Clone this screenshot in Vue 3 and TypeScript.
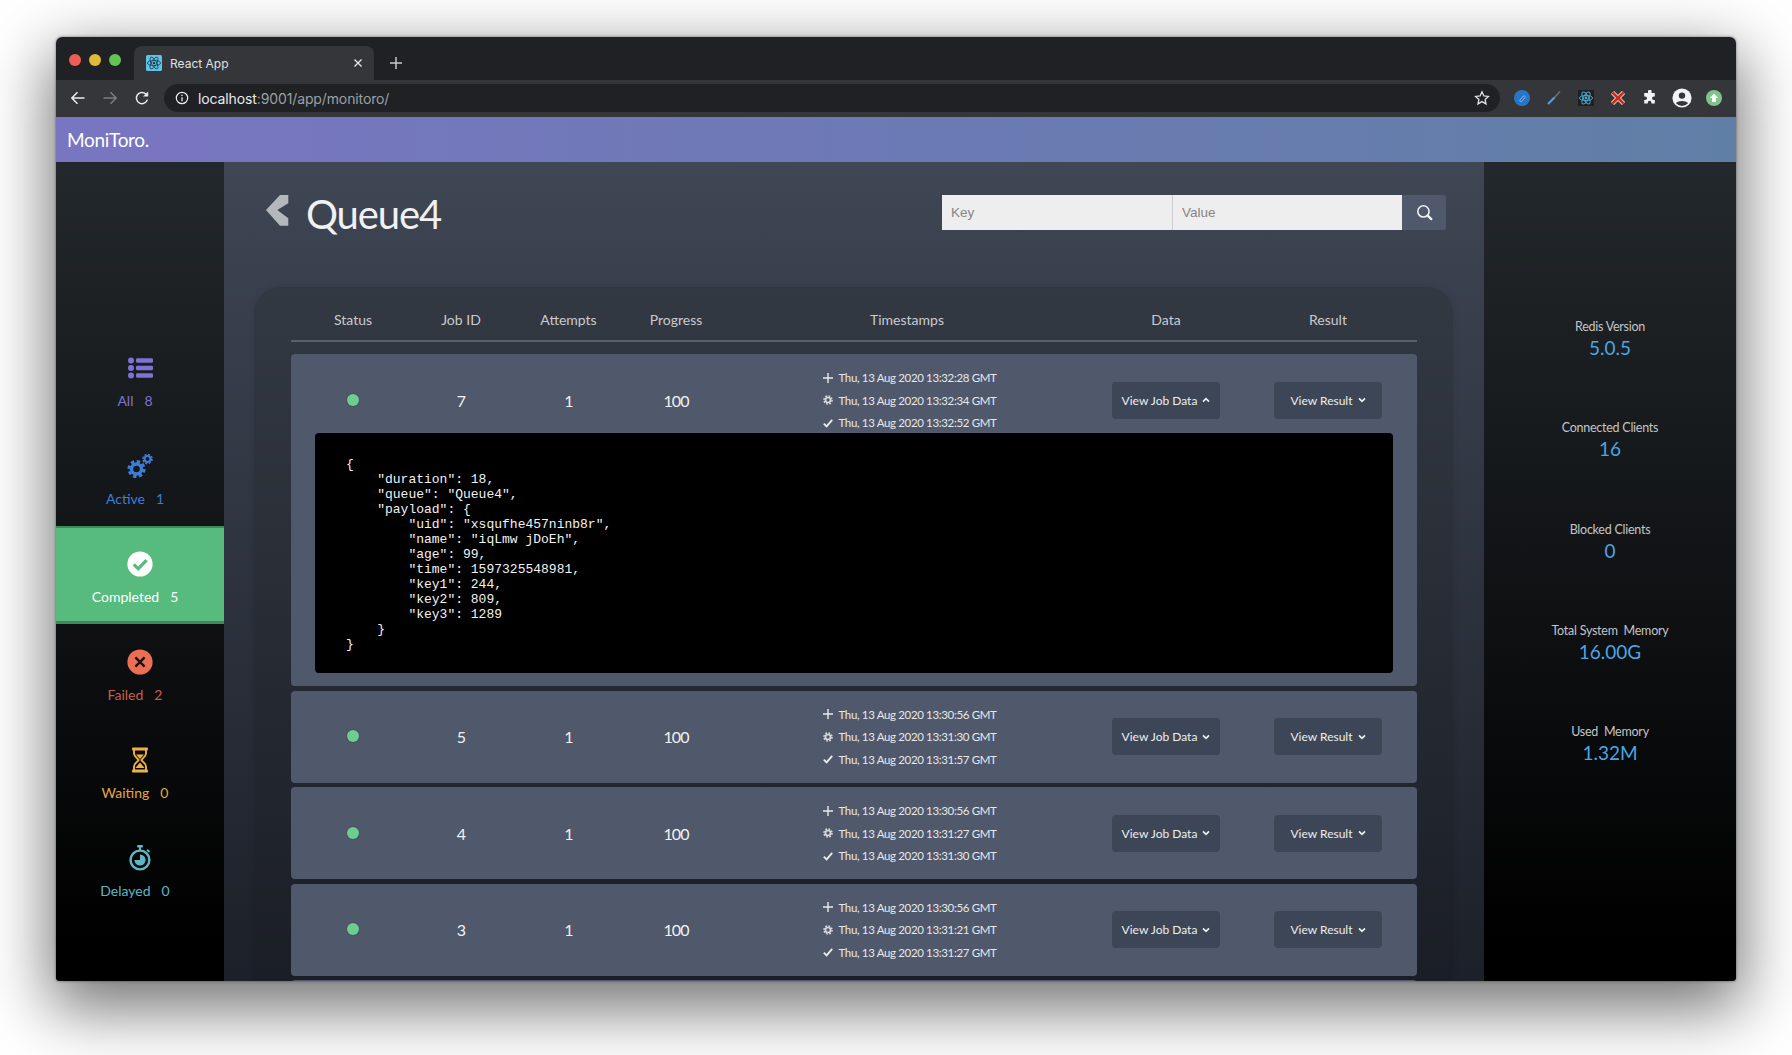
<script setup lang="ts">
interface Nav { key: string; label: string; count: number; cls: string }
interface Job { id: number; ts: [string, string, string]; open?: boolean }
const nav: Nav[] = [
  { key: 'all', label: 'All', count: 8, cls: 'c-all' },
  { key: 'active', label: 'Active', count: 1, cls: 'c-active' },
  { key: 'completed', label: 'Completed', count: 5, cls: 'c-completed' },
  { key: 'failed', label: 'Failed', count: 2, cls: 'c-failed' },
  { key: 'waiting', label: 'Waiting', count: 0, cls: 'c-waiting' },
  { key: 'delayed', label: 'Delayed', count: 0, cls: 'c-delayed' }
]
const stats = [
  ['Redis Version', '5.0.5'],
  ['Connected Clients', '16'],
  ['Blocked Clients', '0'],
  ['Total System  Memory', '16.00G'],
  ['Used  Memory', '1.32M']
]
const jobs: Job[] = [
  { id: 7, ts: ['13:32:28', '13:32:34', '13:32:52'], open: true },
  { id: 5, ts: ['13:30:56', '13:31:30', '13:31:57'] },
  { id: 4, ts: ['13:30:56', '13:31:27', '13:31:30'] },
  { id: 3, ts: ['13:30:56', '13:31:21', '13:31:27'] }
]
const json = `{
    "duration": 18,
    "queue": "Queue4",
    "payload": {
        "uid": "xsqufhe457ninb8r",
        "name": "iqLmw jDoEh",
        "age": 99,
        "time": 1597325548981,
        "key1": 244,
        "key2": 809,
        "key3": 1289
    }
}`
const heads = ['Status', 'Job ID', 'Attempts', 'Progress', 'Timestamps', 'Data', 'Result']
</script>

<template>
  <div class="page">
    <div class="window">
      <div class="tabstrip">
        <div class="lights"><i class="l r"></i><i class="l y"></i><i class="l g"></i></div>
        <div class="tab">
          <svg class="favicon" viewBox="0 0 16 16">
            <rect width="16" height="16" rx="1.5" fill="#5fc3e8" />
            <g fill="none" stroke="#22384a" stroke-width=".8">
              <ellipse cx="8" cy="8" rx="6.6" ry="2.6" />
              <ellipse cx="8" cy="8" rx="6.6" ry="2.6" transform="rotate(60 8 8)" />
              <ellipse cx="8" cy="8" rx="6.6" ry="2.6" transform="rotate(120 8 8)" />
            </g>
            <circle cx="8" cy="8" r="1.3" fill="#22384a" />
          </svg>
          <span class="tabtitle">React App</span>
          <svg class="tabx" viewBox="0 0 10 10"><path d="M1.5 1.5l7 7M8.5 1.5l-7 7" stroke="#e8eaed" stroke-width="1.3" /></svg>
        </div>
        <svg class="newtab" viewBox="0 0 12 12"><path d="M6 0v12M0 6h12" stroke="#c4c7cb" stroke-width="1.5" /></svg>
      </div>
      <div class="toolbar">
        <svg class="tb" viewBox="0 0 16 16"><path d="M14.5 8H2M7.5 2.2L1.8 8l5.7 5.8" fill="none" stroke="#e8eaed" stroke-width="1.5" /></svg>
        <svg class="tb" viewBox="0 0 16 16"><path d="M1.5 8H14M8.5 2.2L14.2 8l-5.7 5.8" fill="none" stroke="#7b7d80" stroke-width="1.5" /></svg>
        <svg class="tb" viewBox="0 0 16 16"><path d="M13.4 9.6A5.6 5.6 0 1 1 12 4.1" fill="none" stroke="#e8eaed" stroke-width="1.5" /><path d="M14.2 1.4v5.2H9z" fill="#e8eaed" /></svg>
        <div class="omni">
          <svg class="info" viewBox="0 0 14 14"><circle cx="7" cy="7" r="5.7" fill="none" stroke="#e8eaed" stroke-width="1.2" /><path d="M7 6.2v4M7 3.8v1.3" stroke="#e8eaed" stroke-width="1.3" /></svg>
          <span class="url"><b>localhost</b>:9001/app/monitoro/</span>
          <svg class="star" viewBox="0 0 16 16"><path d="M8 1.8l1.9 4.1 4.5.5-3.3 3 .9 4.5L8 11.6l-4 2.3.9-4.5-3.3-3 4.5-.5z" fill="none" stroke="#dfe1e5" stroke-width="1.3" /></svg>
        </div>
        <div class="exts">
          <svg class="ext" viewBox="0 0 16 16"><circle cx="8" cy="8" r="8" fill="#2a76c6" /><path d="M5.5 10.5l4-4.5a1.2 1.2 0 0 1 1.6 1.6l-4 4.2z" fill="none" stroke="#7fb0e4" stroke-width="1" /></svg>
          <svg class="ext" viewBox="0 0 16 16"><path d="M14 1.5L8 8" stroke="#6d6f73" stroke-width="1.5" /><path d="M8.5 7.5L2 14" stroke="#5a9bd8" stroke-width="2.2" /></svg>
          <svg class="ext" viewBox="0 0 16 16">
            <rect width="16" height="16" fill="#1d1f22" />
            <g fill="none" stroke="#4fa8cc" stroke-width="1">
              <ellipse cx="8" cy="8" rx="6.6" ry="2.6" />
              <ellipse cx="8" cy="8" rx="6.6" ry="2.6" transform="rotate(60 8 8)" />
              <ellipse cx="8" cy="8" rx="6.6" ry="2.6" transform="rotate(120 8 8)" />
            </g>
            <circle cx="8" cy="8" r="1.4" fill="#4fa8cc" />
          </svg>
          <svg class="ext" viewBox="0 0 16 16"><path d="M2.5 2.5l11 11M13.5 2.5l-11 11" stroke="#f0e6e0" stroke-width="4.4" /><path d="M2.5 2.5l11 11M13.5 2.5l-11 11" stroke="#cf2b1e" stroke-width="2.8" /></svg>
          <svg class="ext" viewBox="0 0 16 16"><path d="M6 1.5a1.8 1.8 0 0 1 3.6 0V3h3.2v3.4h-1a1.8 1.8 0 0 0 0 3.6h1v3.6H9.4v-1.1a1.8 1.8 0 0 0-3.6 0v1.1H2.2V10h1a1.8 1.8 0 0 0 0-3.6h-1V3H6z" fill="#f1f3f4" /></svg>
          <svg class="ext big" viewBox="0 0 20 20"><circle cx="10" cy="10" r="9.6" fill="#f1f3f4" /><circle cx="10" cy="7.6" r="3.2" fill="#35363a" /><path d="M3.8 15a7.5 4.4 0 0 1 12.4 0 8 8 0 0 1-12.4 0z" fill="#35363a" /></svg>
          <svg class="ext" viewBox="0 0 16 16"><circle cx="8" cy="8" r="8" fill="#7fc488" /><path d="M8 3.5L12.2 8H10v4H6V8H3.8z" fill="#fff" /></svg>
        </div>
      </div>
      <header class="brandbar"><span class="brand">MoniToro.</span></header>

      <div class="body">
        <aside class="side">
          <div v-for="n in nav" :key="n.key" class="navitem" :class="n.cls">
            <svg v-if="n.key === 'all'" class="navicon" viewBox="0 0 26 26">
              <g fill="currentColor">
                <circle cx="4" cy="5.5" r="3" /><circle cx="4" cy="13" r="3" /><circle cx="4" cy="20.5" r="3" />
                <rect x="9" y="3.2" width="17" height="4.6" rx="1.4" />
                <rect x="9" y="10.7" width="17" height="4.6" rx="1.4" />
                <rect x="9" y="18.2" width="17" height="4.6" rx="1.4" />
              </g>
            </svg>
            <svg v-else-if="n.key === 'active'" class="navicon" viewBox="0 0 26 26">
              <g fill="none" stroke="currentColor">
                <circle cx="9.5" cy="16" r="5" stroke-width="3.4" />
                <circle cx="9.5" cy="16" r="7.6" stroke-width="3" stroke-dasharray="3.4 2.57" />
                <circle cx="20.5" cy="6" r="2.9" stroke-width="2" />
                <circle cx="20.5" cy="6" r="4.4" stroke-width="1.8" stroke-dasharray="2 1.45" />
              </g>
            </svg>
            <svg v-else-if="n.key === 'completed'" class="navicon" viewBox="0 0 26 26">
              <circle cx="13" cy="13" r="12.6" fill="#fff" />
              <path d="M6.8 13.4l4.4 4.4 8.4-8.6" fill="none" stroke="#56bb7c" stroke-width="3.2" />
            </svg>
            <svg v-else-if="n.key === 'failed'" class="navicon" viewBox="0 0 26 26">
              <circle cx="13" cy="13" r="12.6" fill="#ea6f53" />
              <path d="M8.4 8.4l9.2 9.2M17.6 8.4l-9.2 9.2" stroke="#1a1414" stroke-width="2.4" />
            </svg>
            <svg v-else-if="n.key === 'waiting'" class="navicon" viewBox="0 0 26 26">
              <rect x="5" y="0.5" width="16" height="3" rx="1" fill="currentColor" />
              <rect x="5" y="22.5" width="16" height="3" rx="1" fill="currentColor" />
              <path d="M7 3v3.5c0 3 3.6 4.7 4.6 6.5-1 1.8-4.6 3.5-4.6 6.5V23M19 3v3.5c0 3-3.6 4.7-4.6 6.5 1 1.8 4.6 3.5 4.6 6.5V23" fill="none" stroke="currentColor" stroke-width="1.9" />
              <path d="M9 7.5h8L13 12zM13 15.5l4.6 5.5H8.4z" fill="currentColor" />
            </svg>
            <svg v-else class="navicon" viewBox="0 0 26 26">
              <rect x="10" y="0" width="6" height="2.6" rx="1" fill="currentColor" />
              <rect x="12" y="2" width="2" height="3" fill="currentColor" />
              <path d="M20 4.6l2.5 2.4" stroke="currentColor" stroke-width="2" />
              <circle cx="13" cy="15" r="9.4" fill="none" stroke="currentColor" stroke-width="2.4" />
              <path d="M13 9.4a5.6 5.6 0 1 1-5.6 5.6H13z" fill="currentColor" />
            </svg>
            <div class="navlabel"><span>{{ n.label }}</span><span class="navcount">{{ n.count }}</span></div>
          </div>
        </aside>

        <main class="main">
          <div class="titlerow">
            <svg class="chev" viewBox="0 0 23 31"><path d="M14 0h8.3v8.3L11.3 15l11 8.3v7.4H14L0 15z" fill="#b4b7bb" /></svg>
            <h1 class="title">Queue4</h1>
            <div class="search">
              <input class="inp" placeholder="Key" />
              <input class="inp second" placeholder="Value" />
              <button class="sbtn">
                <svg viewBox="0 0 16 16" class="sicon"><circle cx="7" cy="7" r="5.3" fill="none" stroke="#f1f1f1" stroke-width="1.5" /><path d="M11 11l3.4 3.2" stroke="#f1f1f1" stroke-width="2.2" stroke-linecap="round" /></svg>
              </button>
            </div>
          </div>

          <section class="panel">
            <div class="cols head"><div v-for="h in heads" :key="h">{{ h }}</div></div>
            <div class="rows">
              <article v-for="j in jobs" :key="j.id" class="row">
                <div class="cols cells">
                  <div><i class="dot"></i></div>
                  <div class="num">{{ j.id }}</div>
                  <div class="num">1</div>
                  <div class="num">100</div>
                  <div class="times">
                    <div class="ts">
                      <svg viewBox="0 0 10 10" class="tsi"><path d="M5 0v10M0 5h10" stroke="#e8eaed" stroke-width="1.4" /></svg>
                      Thu, 13 Aug 2020 {{ j.ts[0] }} GMT
                    </div>
                    <div class="ts">
                      <svg viewBox="0 0 10 10" class="tsi"><circle cx="5" cy="5" r="2.5" fill="none" stroke="#d8dade" stroke-width="1.6" /><circle cx="5" cy="5" r="4" fill="none" stroke="#d8dade" stroke-width="1.6" stroke-dasharray="1.7 1.44" /></svg>
                      Thu, 13 Aug 2020 {{ j.ts[1] }} GMT
                    </div>
                    <div class="ts">
                      <svg viewBox="0 0 10 10" class="tsi"><path d="M.8 5.6l2.8 2.8L9.2 1.8" fill="none" stroke="#e8eaed" stroke-width="1.9" /></svg>
                      Thu, 13 Aug 2020 {{ j.ts[2] }} GMT
                    </div>
                  </div>
                  <div>
                    <button class="vbtn">View Job Data
                      <svg viewBox="0 0 8 6" class="caret"><path v-if="j.open" d="M1 4.6L4 1.6l3 3" fill="none" stroke="#eceef0" stroke-width="1.7" /><path v-else d="M1 1.4l3 3 3-3" fill="none" stroke="#eceef0" stroke-width="1.7" /></svg>
                    </button>
                  </div>
                  <div>
                    <button class="vbtn">View Result
                      <svg viewBox="0 0 8 6" class="caret"><path d="M1 1.4l3 3 3-3" fill="none" stroke="#eceef0" stroke-width="1.7" /></svg>
                    </button>
                  </div>
                </div>
                <pre v-if="j.open" class="json">{{ json }}</pre>
              </article>
              <article class="row peek"></article>
            </div>
          </section>
        </main>

        <aside class="stats">
          <div v-for="s in stats" :key="s[0]" class="stat">
            <div class="statlabel">{{ s[0] }}</div>
            <div class="statval">{{ s[1] }}</div>
          </div>
        </aside>
      </div>
    </div>
  </div>
</template>

<style>
html, body { margin: 0; background: #fff; overflow: hidden; }
</style>

<style scoped>
.page { width: 1792px; height: 1055px; box-sizing: border-box; padding: 37px 56px 74px; background: #fff; overflow: hidden; font-family: Lato, "Noto Sans", sans-serif; }
.window { height: 944px; display: flex; flex-direction: column; border-radius: 6px 6px 3px 3px; overflow: hidden; box-shadow: 0 22px 64px 6px rgba(0,0,0,.55), 0 0 3px rgba(0,0,0,.5); }

.tabstrip { height: 43px; flex: none; background: #202124; display: flex; align-items: flex-end; box-sizing: border-box; }
.lights { width: 78px; height: 43px; display: flex; gap: 8px; padding: 17px 0 0 13px; box-sizing: border-box; }
.l { width: 12px; height: 12px; border-radius: 50%; }
.l.r { background: #ed5f56; } .l.y { background: #e1ba3c; } .l.g { background: #62c454; }
.tab { width: 240px; height: 34px; background: #35363a; border-radius: 8px 8px 0 0; display: flex; align-items: center; padding: 0 12px; box-sizing: border-box; }
.favicon { width: 16px; height: 16px; flex: none; }
.tabtitle { margin-left: 8px; flex: 1; font: 12px Inter, sans-serif; color: #dfe1e5; }
.tabx { width: 10px; height: 10px; margin-right: -1px; }
.newtab { width: 12px; height: 12px; margin: 0 0 11px 16px; }

.toolbar { height: 37px; flex: none; background: #35363a; display: flex; align-items: center; padding: 0 0 1px 14px; box-sizing: border-box; }
.tb { width: 16px; height: 16px; margin-right: 16px; flex: none; }
.omni { width: 1336px; height: 28px; margin-left: -2px; background: #202124; border-radius: 14px; display: flex; align-items: center; padding: 0 10px 0 11px; box-sizing: border-box; }
.info { width: 14px; height: 14px; flex: none; }
.url { margin-left: 9px; flex: 1; font: 14px Inter, "Liberation Sans", sans-serif; color: #9aa0a6; letter-spacing: -.12px; }
.url b { font-weight: 400; color: #e8eaed; }
.star { width: 16px; height: 16px; }
.exts { display: flex; align-items: center; gap: 16px; padding-left: 14px; }
.ext { width: 16px; height: 16px; flex: none; }
.ext.big { width: 20px; height: 20px; margin: 0 -2px; }

.brandbar { height: 45px; flex: none; background: linear-gradient(90deg, #7975c2, #607fa6); display: flex; align-items: center; padding-left: 11px; }
.brand { font-size: 19px; color: #fff; letter-spacing: -.3px; }

.body { flex: 1; min-height: 0; display: flex; overflow: hidden; }
.side { width: 168px; flex: none; padding-top: 168px; box-sizing: border-box; background: linear-gradient(180deg, #23282c, #000 95%); }
.navitem { height: 98px; box-sizing: border-box; display: flex; flex-direction: column; align-items: center; padding-top: 25px; }
.navicon { width: 26px; height: 26px; flex: none; }
.navlabel { margin-top: 11px; font-size: 14px; line-height: 18px; padding-right: 10px; display: flex; gap: 11px; }
.c-all { color: #7d73d4; } .c-active { color: #3f7cd8; }
.c-completed { color: #fff; background: #56bb7c; box-shadow: inset 0 2px 0 #40895c, inset 0 -3px 0 #3f8a5c; }
.c-failed { color: #c75f48; }
.c-waiting { color: #efb044; } .c-delayed { color: #5cb6c4; }
.c-waiting .navlabel { color: #e4a843; }

.main { flex: 1; min-width: 0; padding: 33px 38px 0 42px; box-sizing: border-box; background: linear-gradient(180deg, #3f4654, #1c2029 100%); display: flex; flex-direction: column; }
.titlerow { height: 35px; flex: none; display: flex; align-items: center; }
.chev { width: 23px; height: 31px; flex: none; margin-top: -4px; }
.title { margin: 3px 0 0 17px; font-size: 40px; font-weight: 400; color: #f0f1f2; letter-spacing: -1.1px; line-height: 35px; flex: 1; }
.search { display: flex; height: 35px; }
.inp { width: 230px; height: 35px; box-sizing: border-box; border: 0; outline: 0; background: #eee; padding: 0 9px 1px; font: 13.5px "Liberation Sans", sans-serif; color: #333; }
.inp::placeholder { color: #858585; opacity: 1; }
.second { border-left: 1px solid #ccc; }
.sbtn { width: 44px; height: 35px; border: 0; background: #4f596b; border-radius: 0 3px 3px 0; padding: 0; display: flex; align-items: center; justify-content: center; }
.sicon { width: 17px; height: 17px; }

.panel { margin: 57px -7px 0 -12px; padding: 0 36px 0 37px; background: linear-gradient(180deg, #333943, #171a21 100%); border-radius: 26px 26px 0 0; flex: 1; box-shadow: 0 -1px 6px rgba(0,0,0,.08); }
.cols { display: grid; grid-template-columns: 108px 108px 107px 108px 354px 164px 160px; padding-left: 8px; text-align: center; }
.head { height: 55px; box-sizing: border-box; padding-top: 24px; border-bottom: 2px solid #5c6068; color: #c9cbce; font-size: 14px; line-height: 18px; }
.rows { margin-top: 12px; display: flex; flex-direction: column; gap: 4.5px; }
.row { background: #4f596b; border-radius: 4px; flex: none; }
.peek { height: 92px; }
.cells { height: 92px; align-items: center; color: #f0f1f3; font-size: 16px; }
.num { letter-spacing: -1px; }
.dot { display: block; width: 12px; height: 12px; margin: -1px auto 0; border-radius: 50%; background: #6ccd8e; box-shadow: 0 0 2px rgba(0,0,0,.3); }
.times { display: flex; flex-direction: column; gap: 4.5px; align-items: center; padding-left: 6px; }
.ts { height: 18px; display: flex; align-items: center; gap: 5px; font-size: 11.5px; letter-spacing: -.35px; color: #e6e8ea; white-space: nowrap; }
.tsi { width: 10px; height: 10px; flex: none; }
.vbtn { width: 108px; height: 37px; border: 0; border-radius: 4px; background: #3c4656; color: #eceef0; font: 12px Lato, sans-serif; padding: 0; display: inline-flex; align-items: center; justify-content: center; gap: 5px; }
.caret { width: 8px; height: 6px; flex: none; }
.json { margin: -13px 24px 13px; height: 240px; box-sizing: border-box; padding: 24px 31px; background: #000; color: #f2f2f2; border-radius: 4px; font: 13px/15px "Liberation Mono", monospace; overflow: hidden; }

.stats { width: 252px; flex: none; padding-top: 156px; box-sizing: border-box; background: linear-gradient(180deg, #23282c, #000 95%); }
.stat { height: 101.3px; text-align: center; }
.statlabel { font-size: 12.5px; letter-spacing: -.25px; line-height: 18px; color: #c3c5c8; white-space: pre; }
.statval { font-size: 19px; line-height: 24px; color: #4aa6e4; }
</style>
